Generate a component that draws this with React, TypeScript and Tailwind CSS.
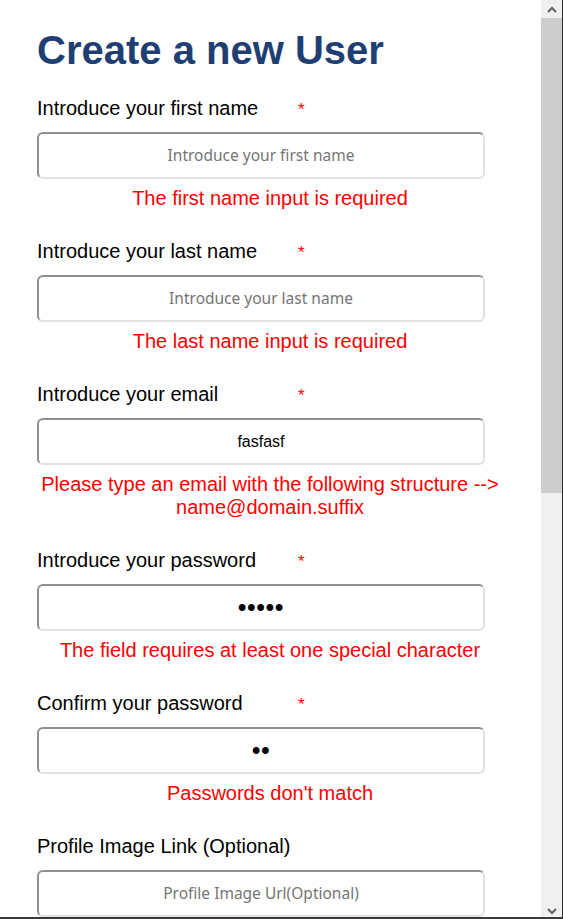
import React from 'react';

interface FieldProps {
  label: string;
  required?: boolean;
  type?: string;
  placeholder: string;
  value?: string;
  error?: React.ReactNode;
}

function Field({ label, required = true, type = 'text', placeholder, value, error }: FieldProps) {
  const isPassword = type === 'password';
  return (
    <div className="pb-[30px]">
      <label className="flex h-[23px] text-[20px] leading-[23px] text-black">
        <span className="w-[261px]">{label}</span>
        {required && <span className="pt-[1px] text-[17px] leading-[23px] text-[#ff0000]">*</span>}
      </label>
      <input
        type={type}
        readOnly
        value={value ?? ''}
        placeholder={placeholder}
        className={`mt-[12px] block h-[47px] w-[448px] rounded-[6px] border-2 border-t-[#8f8f8f] border-l-[#8f8f8f] border-r-[#e2e2e2] border-b-[#e2e2e2] bg-white text-center text-black outline-none placeholder:font-['Noto_Sans',sans-serif] placeholder:text-[15.5px] placeholder:text-[#757575] ${
          isPassword ? 'text-[25px] tracking-[0.5px]' : 'text-[16px]'
        }`}
      />
      {error && (
        <p className="mt-[8px] w-[466px] text-center text-[20px] leading-[23px] text-[#ff0000]">
          {error}
        </p>
      )}
    </div>
  );
}

// the browser's scrollbar + window edge, as seen in the screenshot
function FakeScrollbar() {
  return (
    <div aria-hidden className="fixed inset-y-0 right-0 flex w-[22px] flex-col border-r border-[#2b2b2b] bg-[#f0f0f0]">
      <div className="flex h-[18px] items-center justify-center">
        <svg width="10" height="7" viewBox="0 0 10 7">
          <polyline points="1,6 5,2 9,6" fill="none" stroke="#606060" strokeWidth="2" />
        </svg>
      </div>
      <div className="h-[475px] bg-[#cdcdcd]" />
      <div className="flex-1" />
      <div className="flex h-[16px] items-center justify-center">
        <svg width="10" height="7" viewBox="0 0 10 7">
          <polyline points="1,1 5,5 9,1" fill="none" stroke="#606060" strokeWidth="2" />
        </svg>
      </div>
    </div>
  );
}

export default function App() {
  return (
    <div className="min-h-screen bg-white font-['Liberation_Sans',Arial,sans-serif]">
      <form className="w-[503px] pl-[37px] pt-[27px] pb-[700px]">
        <h1 className="text-[40px] font-bold leading-[46px] text-[#1f3f73]">Create a new User</h1>
        <div className="mt-[24px] flex flex-col">
          <Field
            label="Introduce your first name"
            placeholder="Introduce your first name"
            error="The first name input is required"
          />
          <Field
            label="Introduce your last name"
            placeholder="Introduce your last name"
            error="The last name input is required"
          />
          <Field
            label="Introduce your email"
            placeholder="Introduce your email"
            value="fasfasf"
            error={
              <>
                Please type an email with the following structure --&gt;
                <br />
                name@domain.suffix
              </>
            }
          />
          <Field
            label="Introduce your password"
            type="password"
            placeholder="Introduce your password"
            value="abcde"
            error="The field requires at least one special character"
          />
          <Field
            label="Confirm your password"
            type="password"
            placeholder="Confirm your password"
            value="ab"
            error="Passwords don't match"
          />
          <Field
            label="Profile Image Link (Optional)"
            required={false}
            placeholder="Profile Image Url(Optional)"
          />
          <button
            type="button"
            className="mt-[10px] h-[47px] w-[448px] rounded-[6px] bg-[#1f3f73] text-[20px] text-white"
          >
            Create User
          </button>
        </div>
      </form>
      <FakeScrollbar />
      <div aria-hidden className="fixed inset-x-0 bottom-0 h-[2px] bg-[#3a3a3a]" />
    </div>
  );
}
